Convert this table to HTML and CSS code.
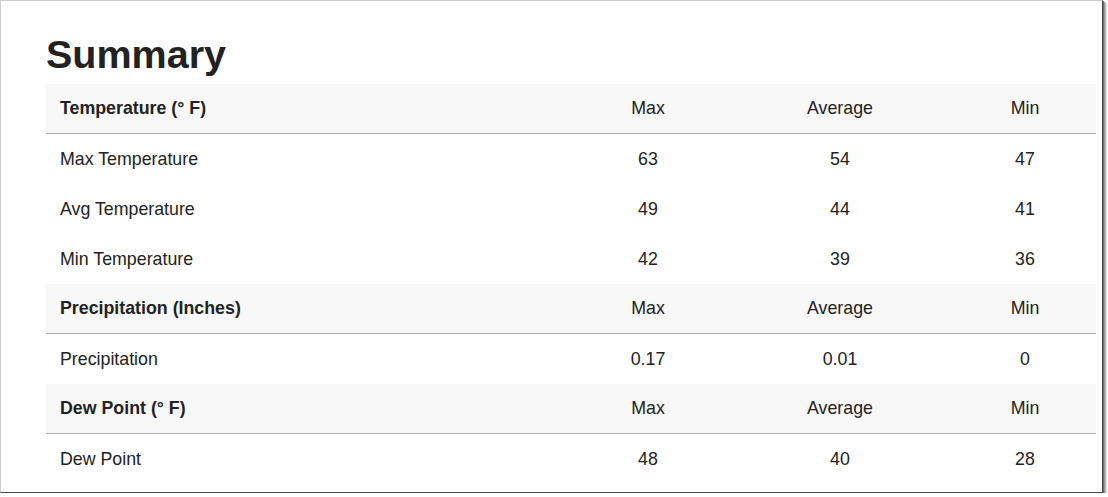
FILE: index.html
```html
<!DOCTYPE html>
<html>
<head>
<meta charset="utf-8">
<title>Summary</title>
<link rel="stylesheet" href="styles.css">
</head>
<body>
<div class="frame">
  <h1 class="title">Summary</h1>
  <table class="summary">
    <colgroup>
      <col class="c-label"><col class="c-max"><col class="c-avg"><col class="c-min">
    </colgroup>
    <tr class="head"><th class="label">Temperature (° F)</th><td>Max</td><td>Average</td><td>Min</td></tr>
    <tr><td class="label">Max Temperature</td><td>63</td><td>54</td><td>47</td></tr>
    <tr><td class="label">Avg Temperature</td><td>49</td><td>44</td><td>41</td></tr>
    <tr><td class="label">Min Temperature</td><td>42</td><td>39</td><td>36</td></tr>
    <tr class="head"><th class="label">Precipitation (Inches)</th><td>Max</td><td>Average</td><td>Min</td></tr>
    <tr><td class="label">Precipitation</td><td>0.17</td><td>0.01</td><td>0</td></tr>
    <tr class="head"><th class="label">Dew Point (° F)</th><td>Max</td><td>Average</td><td>Min</td></tr>
    <tr><td class="label">Dew Point</td><td>48</td><td>40</td><td>28</td></tr>
  </table>
</div>
</body>
</html>
```
FILE: styles.css
```css
html, body {
  margin: 0;
  padding: 0;
  background: #ffffff;
}
body {
  font-family: "Liberation Sans", Arial, sans-serif;
  color: #222222;
}
.frame {
  box-sizing: border-box;
  width: 1103px;
  height: 493px;
  border-top: 1px solid #cccccc;
  border-left: 1px solid #cccccc;
  border-right: 1px solid #444444;
  border-bottom: 1px solid #444444;
  box-shadow: 1px 1px 0 #6e6e6e, 2px 2px 0 #999999, 3px 3px 0 #bdbdbd, 4px 4px 0 #e0e0e0;
  padding: 31px 0 0 45px;
  overflow: hidden;
  background: #fff;
}
.title {
  margin: 0 0 7px 0;
  font-size: 39.5px;
  line-height: 45px;
  font-weight: bold;
  color: #222222;
}
.summary {
  width: 1050px;
  table-layout: fixed;
  border-collapse: collapse;
  border-spacing: 0;
  font-size: 17.8px;
}
.c-label { width: 524px; }
.c-max { width: 156px; }
.c-avg { width: 228px; }
.c-min { width: 142px; }
.summary td, .summary th {
  height: 50px;
  padding: 0;
  text-align: center;
  vertical-align: middle;
  font-weight: normal;
}
.summary .label {
  text-align: left;
  padding-left: 14px;
}
.summary tr.head td, .summary tr.head th {
  height: 49px;
  background: #f8f8f8;
  border-bottom: 1px solid #aaaaaa;
}
.summary tr.head th {
  font-weight: bold;
}
```
